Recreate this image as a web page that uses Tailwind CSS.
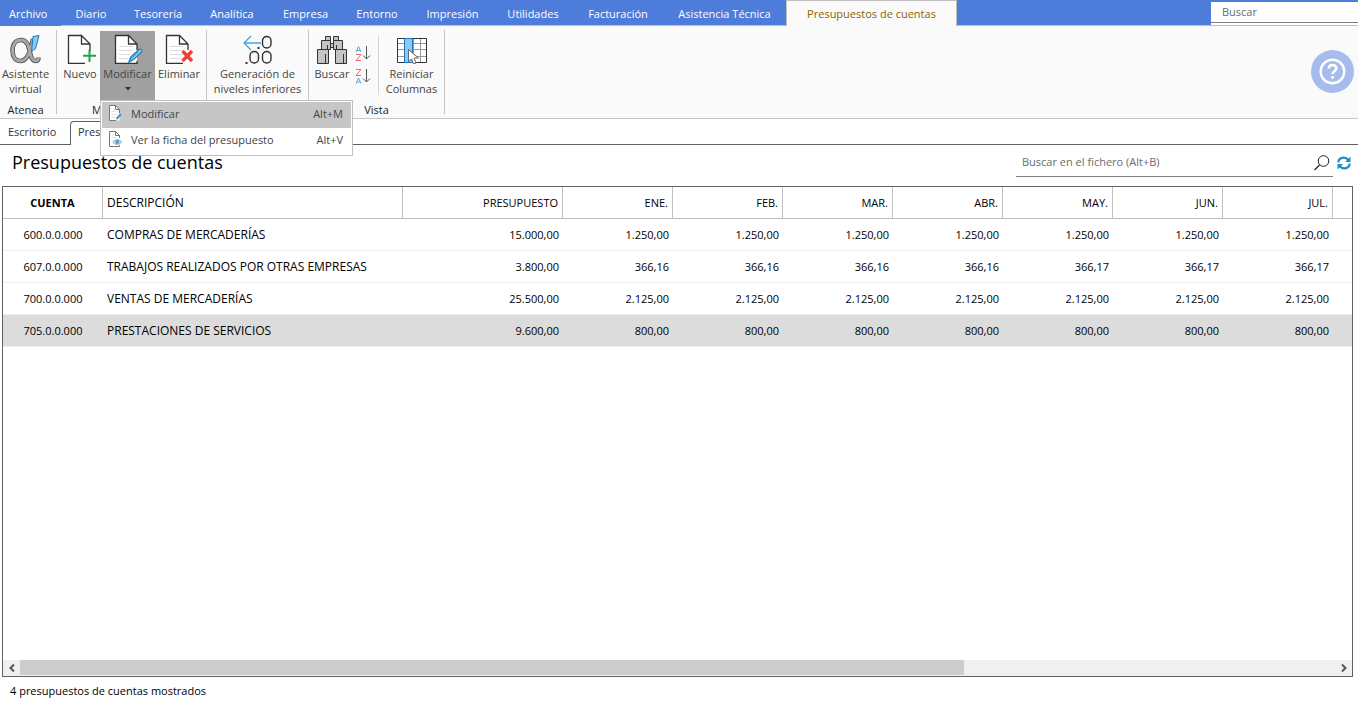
<!DOCTYPE html>
<html lang="es">
<head>
<meta charset="utf-8">
<meta name="viewport" content="width=device-width, initial-scale=1">
<title>Presupuestos de cuentas</title>
<script src="https://cdn.jsdelivr.net/npm/@tailwindcss/browser@4"></script>
</head>
<body class="flex min-h-screen flex-col overflow-x-hidden bg-white font-['Open_Sans','Noto_Sans',sans-serif] text-[11px] text-black">

<header>
  <nav class="flex h-[26px] border-b border-[#c0c0c0] bg-[#4d7cdb] text-[11px] leading-[27px] whitespace-nowrap text-white" aria-label="Menú principal">
    <button class="-mb-px w-[61px] bg-[#4d7cdb] pl-[9px] text-left">Archivo</button>
    <button class="w-[60px]">Diario</button>
    <button class="w-[74px]">Tesorería</button>
    <button class="w-[74px]">Analítica</button>
    <button class="w-[73px]">Empresa</button>
    <button class="w-[70px]">Entorno</button>
    <button class="w-[81px]">Impresión</button>
    <button class="w-[80px]">Utilidades</button>
    <button class="w-[90px]">Facturación</button>
    <button class="w-[123px]">Asistencia Técnica</button>
    <button class="-mb-px w-[171px] border-x border-t border-[#c0c0c0] bg-[#fafafa] leading-[25px] text-[#8a6400]">Presupuestos de cuentas</button>
    <div class="ml-auto flex w-[147px] flex-col bg-white">
      <div class="h-[2px] bg-[#4d7cdb]"></div>
      <input type="text" aria-label="Buscar" placeholder="Buscar" class="h-[21px] w-full border-b border-[#808080] bg-white pb-[2px] pl-[11px] text-[11px] leading-4 outline-none placeholder:text-[#6b6b6b]">
    </div>
  </nav>

  <div class="flex h-[93px] items-start border-b border-[#c6c6c6] bg-[#fafafa] pt-1 text-[11px] leading-[15px] text-[#444]">
    <section class="flex h-[84px] w-[57px] flex-col border-r border-[#c6c6c6] pr-[5px]">
      <button class="flex flex-col items-center pt-1">
        <svg class="mb-[2px] h-[30px] w-[32px]" viewBox="0 0 32 30" fill="none">
          <path d="M23 5C21 16 17 27 10.500 27C5.500 27 2.500 23 2.500 16.500C2.500 10 6 6 11 6C18 6 19 14 20.500 20.500C21.500 25 23 27 25.500 27C27.500 27 28.500 25.500 28.500 23.500" stroke="#555" stroke-width="4.600"/>
          <path d="M23 5C21 16 17 27 10.500 27C5.500 27 2.500 23 2.500 16.500C2.500 10 6 6 11 6C18 6 19 14 20.500 20.500C21.500 25 23 27 25.500 27C27.500 27 28.500 25.500 28.500 23.500" stroke="#a9a9a9" stroke-width="2.800"/>
          <path d="M23 2.500L29 1.500L25.500 14.500L21.500 17.500Z" fill="#8cc8f0" stroke="#1c75bc"/>
        </svg>
        <span>Asistente<br>virtual</span>
      </button>
      <h2 class="mt-auto text-center leading-2 text-[#222]">Atenea</h2>
    </section>

    <section class="flex h-[84px] w-[150px] flex-col border-r border-[#c6c6c6] px-[3px]">
      <div class="flex">
        <button class="flex w-[40px] flex-col items-center pt-1">
          <svg class="mb-[2px] h-[30px] w-[32px]" viewBox="0 0 32 30" fill="none">
            <path d="M26 16V10L17 1.500H4.500V30H21" fill="#fff"/>
            <path d="M26 17V10L17.500 1.500H4.500V29.500H21M17.500 1.500V10H26" stroke="#333" stroke-width="1.300"/>
            <path d="M25.500 15.500V28M19 21.700H32" stroke="#1aa650" stroke-width="2"/>
          </svg>
          <span>Nuevo</span>
        </button>
        <div class="relative">
          <button class="mt-px flex h-[69px] w-[55px] flex-col items-center bg-[#a0a0a0] pt-[3px]" aria-expanded="true" aria-haspopup="menu">
            <svg class="mb-[2px] h-[30px] w-[32px]" viewBox="0 0 32 30" fill="none">
              <path d="M25 28V10L16.500 1.500H3.500V29.500H25Z" fill="#fff"/>
              <path d="M25 16V10L16.500 1.500H3.500V29.500H25V27M16.500 1.500V10H25" stroke="#333" stroke-width="1.300"/>
              <path d="M7 12.500H21M7 16.500H21M7 20.500H18M7 24.500H16" stroke="#ddd"/>
              <path d="M17 28L19 23L27 15.500C28.500 14.500 30.500 16.500 29.500 18L21.500 25.500Z" fill="#bfe2f8" stroke="#1c84c6" stroke-width="1.500"/>
              <path d="M19.500 24.500L27.500 17" stroke="#1c84c6"/>
            </svg>
            <span>Modificar</span>
            <svg class="mt-[6px] h-1 w-[6px]" viewBox="0 0 6 4"><path d="M0 0H6L3 3.500Z" fill="#333"/></svg>
          </button>
          <div role="menu" class="absolute top-[70px] left-0 z-10 flex w-[253px] flex-col border border-[#c0c0c0] bg-white p-px text-[11px] leading-6 whitespace-nowrap">
            <button role="menuitem" class="flex h-[26px] items-start bg-[#c6c6c6] pr-2 pl-[5px]">
              <svg class="mt-[2px] mr-[7px] h-[18px] w-[17px]" viewBox="0 0 17 18" fill="none">
                <path d="M2.500 1.500H8.500L12.500 5.500V16.500H2.500Z" fill="#fff"/>
                <path d="M12.500 9V5.500L8.500 1.500H2.500V16.500H9M8.500 1.500V5.500H12.500" stroke="#777"/>
                <path d="M4.500 7.500H9M4.500 10.500H9M4.500 13.500H8" stroke="#ddd"/>
                <path d="M9.500 15L14 10" stroke="#3d9ad6" stroke-width="2.200"/>
              </svg>
              <span>Modificar</span><span class="ml-auto">Alt+M</span>
            </button>
            <button role="menuitem" class="flex h-[26px] items-start pr-2 pl-[5px]">
              <svg class="mt-[2px] mr-[7px] h-[18px] w-[17px]" viewBox="0 0 17 18" fill="none">
                <path d="M12.500 8V5.500L8.500 1.500H2.500V16.500H12.500V15M8.500 1.500V5.500H12.500" stroke="#777"/>
                <path d="M4.500 7.500H9M4.500 10.500H6" stroke="#ddd"/>
                <path d="M6 12C8 8.800 12.500 8.800 14.500 12C12.500 15.200 8 15.200 6 12Z" fill="#cbdce8" stroke="#9ab4c6"/>
                <circle cx="10.300" cy="12" r="2" fill="#4f9fd0"/>
              </svg>
              <span>Ver la ficha del presupuesto</span><span class="ml-auto">Alt+V</span>
            </button>
          </div>
        </div>
        <button class="flex w-[48px] flex-col items-center pt-1">
          <svg class="mb-[2px] h-[30px] w-[32px]" viewBox="0 0 32 30" fill="none">
            <path d="M25 17V10L16.500 1.500H3.500V29.500H20L25 25Z" fill="#fff"/>
            <path d="M25 16V10L16.500 1.500H3.500V29.500H20M16.500 1.500V10H25" stroke="#333" stroke-width="1.300"/>
            <path d="M7 12.500H20M7 16.500H19M7 20.500H19M7 24.500H18" stroke="#ddd"/>
            <path d="M19.500 17L29 27M29 17L19.500 27" stroke="#ef3e36" stroke-width="3.400"/>
          </svg>
          <span>Eliminar</span>
        </button>
      </div>
      <h2 class="mt-auto text-center leading-2 text-[#222]">Mantenimiento</h2>
    </section>

    <section class="h-[84px] w-[102px] border-r border-[#c6c6c6]">
      <button class="flex w-full flex-col items-center pt-1 whitespace-nowrap">
        <svg class="mb-[2px] h-[30px] w-[32px]" viewBox="0 0 32 30" fill="none">
          <path d="M19 9H2M9 2L2 9L9 16" stroke="#4aa3dc" stroke-width="1.300"/>
          <g stroke="#333" stroke-width="1.400"><rect x="20.500" y="2.500" width="8.500" height="11.500" rx="4.200"/><rect x="8" y="17.500" width="8.500" height="11.500" rx="4.200"/><rect x="20.500" y="17.500" width="8.500" height="11.500" rx="4.200"/></g>
          <path d="M15.500 13H17.500V15H15.500ZM3.500 28H5.500V30H3.500Z" fill="#333"/>
        </svg>
        <span>Generación de<br>niveles inferiores</span>
      </button>
    </section>

    <section class="flex h-[84px] w-[136px] flex-col border-r border-[#c6c6c6]">
      <div class="flex">
        <button class="flex w-[46px] flex-col items-center pt-1">
          <svg class="mb-[2px] h-[30px] w-[32px]" viewBox="0 0 32 30" stroke="#333" fill="#c4c4c4">
            <path d="M9.500 2.500H14.500V6.500H9.500ZM17.500 2.500H22.500V6.500H17.500ZM5.500 6.500H14.500V15.500H5.500ZM17.500 6.500H26.500V15.500H17.500ZM1.500 15.500H12.500V29.500H1.500ZM19.500 15.500H30.500V29.500H19.500ZM14.500 9.500H17.500V13.500H14.500Z"/>
            <path d="M11.500 11V15M20.500 11V15M9.500 20V29M27.500 20V29" fill="none"/>
          </svg>
          <span>Buscar</span>
        </button>
        <div class="flex w-[23px] flex-col gap-[5px] pt-[15px]">
          <button aria-label="Orden ascendente" class="h-[18px] w-4">
            <svg class="h-[18px] w-4" viewBox="0 0 16 18" fill="none">
              <path d="M1 7L3.500 1.500L6 7M2 5.500H5" stroke="#5aa9dd"/><path d="M1 9.500H6L1 15.500H6" stroke="#ef6a68"/><path d="M11.500 1V13.500M8 10.500L11.500 14L15 10.500" stroke="#555"/>
            </svg>
          </button>
          <button aria-label="Orden descendente" class="h-[18px] w-4">
            <svg class="h-[18px] w-4" viewBox="0 0 16 18" fill="none">
              <path d="M1 1.500H6L1 7.500H6" stroke="#ef6a68"/><path d="M1 15.500L3.500 10L6 15.500M2 14H5" stroke="#5aa9dd"/><path d="M11.500 1V13.500M8 10.500L11.500 14L15 10.500" stroke="#555"/>
            </svg>
          </button>
        </div>
        <div class="mt-[6px] h-[59px] border-r border-[#d4d4d4]"></div>
        <button class="flex flex-1 flex-col items-center pt-1">
          <svg class="mb-[2px] h-[30px] w-[32px]" viewBox="0 0 32 30" fill="none">
            <path d="M1.500 4.500H30.500V28.500H1.500Z" fill="#fff"/>
            <path d="M2 9.500H30M2 15.500H30M2 22.500H30M17.500 5V28M24.500 5V28" stroke="#999"/>
            <path d="M1.500 4.500H30.500V28.500H1.500Z" stroke="#333"/>
            <path d="M8.500 4.500H16.500V28.500H8.500Z" fill="#8cc8f0" stroke="#1c75bc"/>
            <path d="M12.500 15.500V27.500L15.500 25L17.500 30L20 29L18 24H22.500Z" fill="#fff" stroke="#666"/>
          </svg>
          <span>Reiniciar<br>Columnas</span>
        </button>
      </div>
      <h2 class="mt-auto text-center leading-2 text-[#222]">Vista</h2>
    </section>

    <button aria-label="Ayuda" class="mt-5 mr-1 ml-auto">
      <svg class="h-[43px] w-[43px]" viewBox="0 0 43 43" fill="none">
        <circle cx="21.500" cy="21.500" r="21.500" fill="#a6bcec"/>
        <circle cx="21.500" cy="21.500" r="11.800" stroke="#fff" stroke-width="2.400"/>
        <path d="M17.800 18.500C18 13.700 25.500 14 25.300 18.500C25.200 21.300 21.600 21.200 21.600 24" stroke="#fff" stroke-width="2.600"/>
        <circle cx="21.600" cy="27.300" r="1.500" fill="#fff"/>
      </svg>
    </button>
  </div>

  <div role="tablist" class="flex h-[26px] text-[11px] leading-[25px] text-[#333]">
    <button role="tab" class="w-[70px] border-b border-[#606060] pl-2 text-left">Escritorio</button>
    <button role="tab" aria-selected="true" class="mt-[2px] rounded-tl border-t border-l border-[#606060] px-[7px] pb-[3px] leading-5">Presupuestos de cuentas</button>
    <div class="flex-1 border-b border-l border-[#606060]"></div>
  </div>
</header>

<main class="flex flex-1 flex-col">
  <div class="flex h-[41px] items-start justify-between pr-[7px] pl-3">
    <h1 class="pt-[5px] text-[18px] leading-6">Presupuestos de cuentas</h1>
    <div class="flex">
      <div class="flex h-8 w-[317px] items-center border-b border-[#808080] pr-[3px]">
        <input type="search" aria-label="Buscar en el fichero" placeholder="Buscar en el fichero (Alt+B)" class="min-w-0 flex-1 pt-[2px] pl-[6px] text-[11px] leading-4 outline-none placeholder:text-[#6b6b6b]">
        <button aria-label="Buscar">
          <svg class="mt-1 h-4 w-4" viewBox="0 0 16 16" fill="none" stroke="#222"><circle cx="9.500" cy="6" r="5.300"/><path d="M5.500 10L0.500 15" stroke-width="1.300"/></svg>
        </button>
      </div>
      <button aria-label="Actualizar" class="ml-1 pt-1">
        <svg class="h-[14px] w-[14px]" viewBox="0 0 14 14" fill="none" stroke="#1f8ccc" stroke-width="2.200">
          <path d="M1.300 6.500C1.500 1.500 8 0 11.500 4"/><path d="M12.700 7.500C12.500 12.500 6 14 2.500 10"/>
          <path d="M13.500 0.500V6H8ZM0.500 13.500V8H6Z" fill="#1f8ccc" stroke="none"/>
        </svg>
      </button>
    </div>
  </div>

  <div class="mr-[5px] ml-[2px] flex flex-1 flex-col overflow-hidden border border-[#606060]">
    <table class="w-full table-fixed border-separate border-spacing-0 text-[11px] leading-[31px] whitespace-nowrap [&_td]:h-8 [&_td]:border-b [&_td]:border-[#eee] [&_td]:p-0 [&_td]:pr-1 [&_td]:text-right [&_th]:h-8 [&_th]:border-r [&_th]:border-b [&_th]:border-[#c0c0c0] [&_th]:p-0 [&_th]:pr-1 [&_th]:text-right [&_th]:font-normal">
      <colgroup><col class="w-[100px]"><col class="w-[300px]"><col class="w-[160px]"><col class="w-[110px]"><col class="w-[110px]"><col class="w-[110px]"><col class="w-[110px]"><col class="w-[110px]"><col class="w-[110px]"><col class="w-[110px]"><col></colgroup>
      <thead>
        <tr><th class="pr-0! text-center! font-bold!">CUENTA</th><th class="pl-1! text-left! text-[12px]">DESCRIPCIÓN</th><th>PRESUPUESTO</th><th>ENE.</th><th>FEB.</th><th>MAR.</th><th>ABR.</th><th>MAY.</th><th>JUN.</th><th>JUL.</th><th class="border-r-0!"></th></tr>
      </thead>
      <tbody>
        <tr><td class="pr-0! text-center!">600.0.0.000</td><td class="pl-1! text-left! text-[12px]">COMPRAS DE MERCADERÍAS</td><td>15.000,00</td><td>1.250,00</td><td>1.250,00</td><td>1.250,00</td><td>1.250,00</td><td>1.250,00</td><td>1.250,00</td><td>1.250,00</td><td></td></tr>
        <tr><td class="pr-0! text-center!">607.0.0.000</td><td class="pl-1! text-left! text-[12px]">TRABAJOS REALIZADOS POR OTRAS EMPRESAS</td><td>3.800,00</td><td>366,16</td><td>366,16</td><td>366,16</td><td>366,16</td><td>366,17</td><td>366,17</td><td>366,17</td><td></td></tr>
        <tr><td class="pr-0! text-center!">700.0.0.000</td><td class="pl-1! text-left! text-[12px]">VENTAS DE MERCADERÍAS</td><td>25.500,00</td><td>2.125,00</td><td>2.125,00</td><td>2.125,00</td><td>2.125,00</td><td>2.125,00</td><td>2.125,00</td><td>2.125,00</td><td></td></tr>
        <tr class="bg-[#dcdcdc]"><td class="pr-0! text-center!">705.0.0.000</td><td class="pl-1! text-left! text-[12px]">PRESTACIONES DE SERVICIOS</td><td>9.600,00</td><td>800,00</td><td>800,00</td><td>800,00</td><td>800,00</td><td>800,00</td><td>800,00</td><td>800,00</td><td></td></tr>
      </tbody>
    </table>
    <div class="mt-auto flex h-4 justify-between bg-[#f0f0f0] pb-px">
      <button aria-label="Desplazar a la izquierda" class="flex w-[17px] items-center justify-center"><svg class="h-[8px] w-[6px]" viewBox="0 0 6 8" fill="none" stroke="#555" stroke-width="2"><path d="M5 0.500L1.500 4L5 7.500"/></svg></button>
      <div class="flex-1"><div class="h-full bg-[#cdcdcd]" style="width:71.8%"></div></div>
      <button aria-label="Desplazar a la derecha" class="flex w-[17px] items-center justify-center"><svg class="h-[8px] w-[6px]" viewBox="0 0 6 8" fill="none" stroke="#555" stroke-width="2"><path d="M1 0.500L4.500 4L1 7.500"/></svg></button>
    </div>
  </div>
</main>

<footer class="h-[41px] pt-[6px] pl-[10px] text-[11px] leading-4">4 presupuestos de cuentas mostrados</footer>
</body>
</html>
